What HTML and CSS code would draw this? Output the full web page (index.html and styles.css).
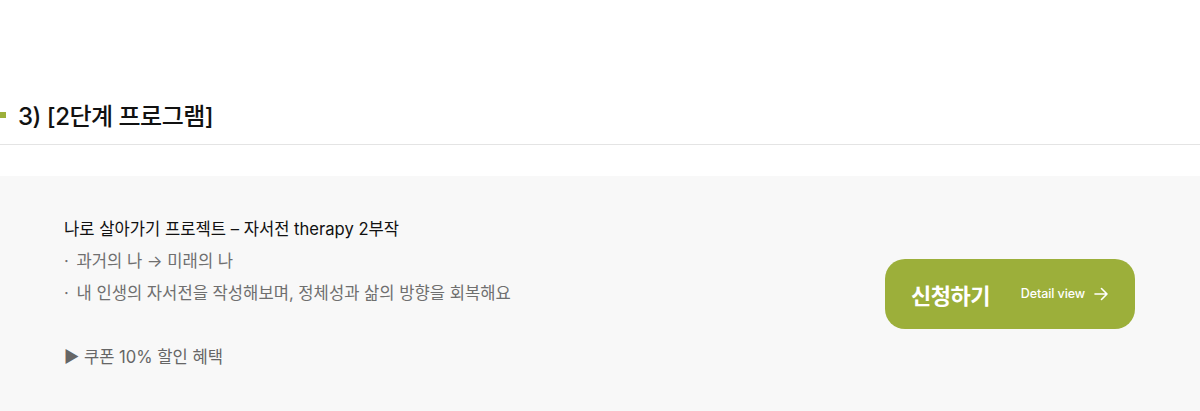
FILE: index.html
```html
<html>
<head>
<meta charset="UTF-8">
<title>2단계 프로그램</title>
<link rel="stylesheet" href="styles.css">
</head>
<body>
	<div class="secTitle">
		<span class="secMark"></span>
		<h3>3) [2단계 프로그램]</h3>
	</div>
	<div class="progBox">
		<div class="progInfo">
			<p class="progName">나로 살아가기 프로젝트 – 자서전 therapy 2부작</p>
			<p class="progLine"><span class="dot">·</span> 과거의 나 → 미래의 나</p>
			<p class="progLine"><span class="dot">·</span> 내 인생의 자서전을 작성해보며, 정체성과 삶의 방향을 회복해요</p>
			<p class="progCoupon">▶ 쿠폰 10% 할인 혜택</p>
		</div>
		<a class="btnApply" href="#">
			<span class="btnMain">신청하기</span>
			<span class="btnSub">Detail view
				<svg width="14" height="14" viewBox="0 0 14 14"><path d="M1 7h12M7.5 1.5l5.5 5.5-5.5 5.5" fill="none" stroke="#fff" stroke-width="1.6" stroke-linecap="round" stroke-linejoin="round"/></svg>
			</span>
		</a>
	</div>
</body>
</html>
```

FILE: styles.css
```css
body
{
	margin: 0;
	padding: 0;
	background: #fff;
	font-family: Inter, "Noto Sans CJK KR", sans-serif;
	color: #111;
}

p { margin: 0; }

.secTitle
{
	display: flex;
	align-items: center;
	height: 145px;
	padding-top: 84px;
	box-sizing: border-box;
	border-bottom: 1px solid #e4e4e4;
}

.secMark
{
	width: 6px;
	height: 6px;
	background: #9caf3a;
	margin-right: 12px;
	margin-top: 1px;
}

.secTitle h3
{
	margin: 0;
	font-size: 24px;
	font-weight: 500;
	letter-spacing: -0.5px;
}

.progBox
{
	margin-top: 31px;
	background: #f8f8f8;
	height: 235px;
	display: flex;
	align-items: center;
	justify-content: space-between;
	padding: 0 65px 0 64px;
}

.progInfo
{
	margin-top: -2px;
}

.progName
{
	font-size: 16.6px;
	line-height: 32px;
	color: #111;
}

.progLine
{
	font-size: 16.6px;
	line-height: 32px;
	color: #6f6f6f;
}

.dot
{
	margin-right: 3px;
}

.progCoupon
{
	margin-top: 32px;
	font-size: 16.6px;
	line-height: 32px;
	color: #666;
}

.btnApply
{
	display: flex;
	align-items: center;
	width: 250px;
	height: 70px;
	box-sizing: border-box;
	padding: 0 27px 0 26px;
	border-radius: 20px;
	background: #9caf3a;
	color: #fff;
	text-decoration: none;
	margin-top: 0;
}

.btnMain
{
	font-size: 22px;
	font-weight: 700;
	letter-spacing: -0.5px;
}

.btnSub
{
	display: flex;
	align-items: center;
	gap: 9px;
	margin-left: auto;
	font-size: 12.5px;
	font-weight: 500;
	letter-spacing: -0.1px;
}
```
